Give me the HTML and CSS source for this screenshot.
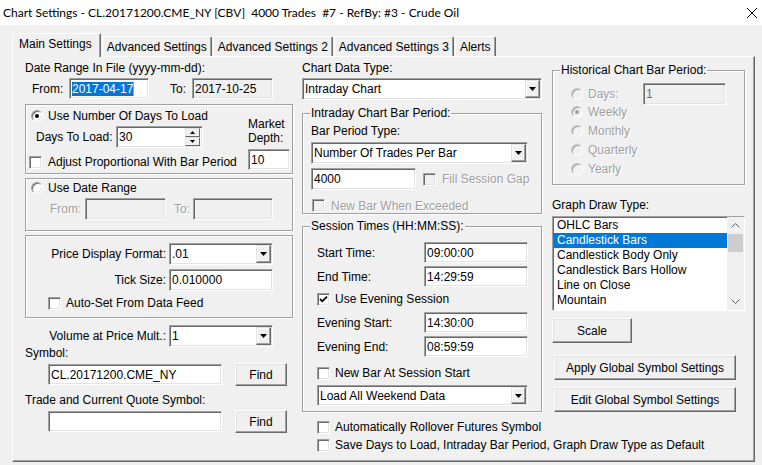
FILE: index.html
```html
<!DOCTYPE html>
<html>
<head>
<meta charset="utf-8">
<link rel="stylesheet" href="styles.css">
</head>
<body>
<div class="titlebar">
  <span class="title">Chart Settings - CL.20171200.CME_NY [CBV]  4000 Trades  #7 - RefBy: #3 - Crude Oil</span>
  <svg class="close" viewBox="0 0 10 10"><path d="M0 0L10 10M10 0L0 10"/></svg>
</div>
<div class="tabs">
  <div class="tab active">Main Settings</div>
  <div class="tab">Advanced Settings</div>
  <div class="tab">Advanced Settings 2</div>
  <div class="tab">Advanced Settings 3</div>
  <div class="tab">Alerts</div>
</div>
<div class="panel">
  <!-- LEFT COLUMN -->
  <div class="col col-left">
    <div class="lbl">Date Range In File (yyyy-mm-dd):</div>
    <div class="daterow">
      <span class="l-from">From:</span>
      <div class="edit w-from"><span class="sel">2017-04-17</span><span class="caret"></span></div>
      <span class="l-to">To:</span>
      <div class="edit dis ro w-to">2017-10-25</div>
    </div>
    <div class="grp g1">
      <div class="g1-main">
        <div class="opt r-days"><span class="rad on"></span><span>Use Number Of Days To Load</span></div>
        <div class="days">
          <span class="l-days">Days To Load:</span>
          <div class="edit w-days">
            <span class="val">30</span>
            <div class="spin">
              <div class="sbtn"><svg class="stri" viewBox="0 0 5 3"><path d="M2.5 0L5 3H0z"/></svg></div>
              <div class="sbtn"><svg class="stri" viewBox="0 0 5 3"><path d="M0 0H5L2.5 3z"/></svg></div>
            </div>
          </div>
        </div>
        <div class="opt c-adj"><span class="chk"></span><span>Adjust Proportional With Bar Period</span></div>
      </div>
      <div class="g1-md">
        <div class="md-lbl">Market<br>Depth:</div>
        <div class="edit w-md">10</div>
      </div>
    </div>
    <div class="grp g2">
      <div class="opt r-range"><span class="rad"></span><span>Use Date Range</span></div>
      <div class="rangerow">
        <span class="l-rfrom dtext">From:</span>
        <div class="edit dis w-rfrom"></div>
        <span class="l-rto dtext">To:</span>
        <div class="edit dis w-rto"></div>
      </div>
    </div>
    <div class="grp g3">
      <div class="frow">
        <span class="flbl">Price Display Format:</span>
        <div class="combo w-fmt"><span class="val">.01</span><span class="drop"><svg class="tri" viewBox="0 0 7 4"><path d="M0 0h7L3.5 4z"/></svg></span></div>
      </div>
      <div class="frow r-tick">
        <span class="flbl">Tick Size:</span>
        <div class="edit w-fmt">0.010000</div>
      </div>
      <div class="opt c-auto"><span class="chk"></span><span>Auto-Set From Data Feed</span></div>
    </div>
    <div class="frow r-vol">
      <span class="flbl vlbl">Volume at Price Mult.:</span>
      <div class="combo w-fmt"><span class="val">1</span><span class="drop"><svg class="tri" viewBox="0 0 7 4"><path d="M0 0h7L3.5 4z"/></svg></span></div>
    </div>
    <div class="lbl l-sym">Symbol:</div>
    <div class="symrow">
      <div class="edit w-sym">CL.20171200.CME_NY</div>
      <div class="btn w-find">Find</div>
    </div>
    <div class="lbl l-trade">Trade and Current Quote Symbol:</div>
    <div class="symrow r-trade">
      <div class="edit w-sym"></div>
      <div class="btn w-find">Find</div>
    </div>
  </div>

  <!-- MIDDLE COLUMN -->
  <div class="col col-mid">
    <div class="lbl">Chart Data Type:</div>
    <div class="combo w-cdt"><span class="val">Intraday Chart</span><span class="drop"><svg class="tri" viewBox="0 0 7 4"><path d="M0 0h7L3.5 4z"/></svg></span></div>
    <fieldset class="fs fs-bar">
      <legend>Intraday Chart Bar Period:</legend>
      <div class="lbl l-bpt">Bar Period Type:</div>
      <div class="combo w-bpt"><span class="val">Number Of Trades Per Bar</span><span class="drop"><svg class="tri" viewBox="0 0 7 4"><path d="M0 0h7L3.5 4z"/></svg></span></div>
      <div class="barrow">
        <div class="edit w-4000">4000</div>
        <span class="chk dis c-fill"></span><span class="dtext">Fill Session Gap</span>
      </div>
      <div class="opt c-exc"><span class="chk dis"></span><span class="dtext">New Bar When Exceeded</span></div>
    </fieldset>
    <fieldset class="fs fs-sess">
      <legend>Session Times (HH:MM:SS):</legend>
      <div class="trow r-start"><span class="tlbl">Start Time:</span><div class="edit w-time">09:00:00</div></div>
      <div class="trow r-end"><span class="tlbl">End Time:</span><div class="edit w-time">14:29:59</div></div>
      <div class="opt c-eve"><span class="chk"><svg class="tick" viewBox="0 0 11 11"><path d="M2 5L4.3 7.3L9 2.6"/></svg></span><span>Use Evening Session</span></div>
      <div class="trow r-estart"><span class="tlbl">Evening Start:</span><div class="edit w-time">14:30:00</div></div>
      <div class="trow r-eend"><span class="tlbl">Evening End:</span><div class="edit w-time">08:59:59</div></div>
      <div class="opt c-nbs"><span class="chk"></span><span>New Bar At Session Start</span></div>
      <div class="combo w-wknd"><span class="val">Load All Weekend Data</span><span class="drop"><svg class="tri" viewBox="0 0 7 4"><path d="M0 0h7L3.5 4z"/></svg></span></div>
    </fieldset>
    <div class="opt c-roll"><span class="chk"></span><span>Automatically Rollover Futures Symbol</span></div>
    <div class="opt c-save"><span class="chk"></span><span>Save Days to Load, Intraday Bar Period, Graph Draw Type as Default</span></div>
  </div>

  <!-- RIGHT COLUMN -->
  <div class="col col-right">
    <fieldset class="fs fs-hist">
      <legend>Historical Chart Bar Period:</legend>
      <div class="hrow r-hdays"><span class="rad dis"></span><span class="dtext hl-days">Days:</span><div class="edit dis w-hdays">1</div></div>
      <div class="hrow"><span class="rad dis on"></span><span class="dtext">Weekly</span></div>
      <div class="hrow r-hnext"><span class="rad dis"></span><span class="dtext">Monthly</span></div>
      <div class="hrow r-hnext"><span class="rad dis"></span><span class="dtext">Quarterly</span></div>
      <div class="hrow r-hnext"><span class="rad dis"></span><span class="dtext">Yearly</span></div>
    </fieldset>
    <div class="lbl l-gdt">Graph Draw Type:</div>
    <div class="list">
      <div class="items">
        <div class="item">OHLC Bars</div>
        <div class="item sel">Candlestick Bars</div>
        <div class="item">Candlestick Body Only</div>
        <div class="item">Candlestick Bars Hollow</div>
        <div class="item">Line on Close</div>
        <div class="item">Mountain</div>
      </div>
      <div class="sb">
        <div class="sb-arrow"><svg class="chev" viewBox="0 0 9 5"><path d="M0.5 4.5L4.5 0.5L8.5 4.5"/></svg></div>
        <div class="thumb"></div>
        <div class="sb-arrow sb-down"><svg class="chev" viewBox="0 0 9 5"><path d="M0.5 0.5L4.5 4.5L8.5 0.5"/></svg></div>
      </div>
    </div>
    <div class="btn w-scale">Scale</div>
    <div class="btn w-glob b-apply">Apply Global Symbol Settings</div>
    <div class="btn w-glob b-edit">Edit Global Symbol Settings</div>
  </div>
</div>
</body>
</html>
```
FILE: styles.css
```css
html, body {
  margin: 0;
  padding: 0;
}
body {
  width: 762px;
  height: 465px;
  overflow: hidden;
  background: #f0f0f0;
  font-family: "Liberation Sans", Arial, sans-serif;
  font-size: 12px;
  line-height: 14px;
  color: #000;
}

/* title bar */
.titlebar {
  height: 25px;
  background: #fff;
  display: flex;
  align-items: center;
  justify-content: space-between;
  padding: 0 5px 0 3px;
}
.title {
  font-family: Lato, "Liberation Sans", sans-serif;
  font-size: 12px;
  white-space: pre;
}
.close {
  width: 10px;
  height: 10px;
  stroke: #000;
  stroke-width: 1;
  fill: none;
}

/* tabs */
.tabs {
  display: flex;
  align-items: flex-end;
  height: 23px;
  margin: 8px 0 0 12px;
  position: relative;
  z-index: 1;
}
.tab {
  box-sizing: border-box;
  height: 20px;
  padding: 3px 4px 0 4px;
  border: 1px solid;
  border-bottom: none;
  border-color: #fff #696969 transparent #fff;
  box-shadow: inset -1px 0 0 #a0a0a0;
  border-radius: 2px 2px 0 0;
  white-space: nowrap;
  margin-left: 1px;
}
.tab.active {
  height: 24px;
  margin-bottom: -1px;
  margin-left: 0;
  padding: 3px 8px 0 6px;
  background: #f0f0f0;
}

/* panel */
.panel {
  box-sizing: border-box;
  width: 743px;
  height: 406px;
  margin-left: 12px;
  border: 1px solid;
  border-color: #fff #696969 #696969 #fff;
  box-shadow: inset -1px -1px 0 #a0a0a0;
  display: flex;
  padding: 4px 0 0 12px;
}
.col {
  display: flex;
  flex-direction: column;
  align-items: flex-start;
}
.col-left { width: 268px; }
.col-mid { width: 240px; margin-left: 9px; }
.col-right { width: 193px; margin-left: 10px; }

.lbl { white-space: nowrap; }
.dtext { color: #a0a0a0; text-shadow: 1px 1px 0 #fff; white-space: nowrap; }

/* generic controls */
.edit {
  box-sizing: border-box;
  height: 22px;
  border: 1px solid;
  border-color: #a0a0a0 #fff #fff #a0a0a0;
  box-shadow: inset 1px 1px 0 #696969, inset -1px -1px 0 #e3e3e3;
  background: #fff;
  padding: 0 2px;
  display: flex;
  align-items: center;
  white-space: nowrap;
  overflow: hidden;
}
.edit.dis { background: #f0f0f0; color: #6d6d6d; }
.edit.ro { color: #000; }
.sel { background: #0078d7; color: #fff; }
.caret { display: inline-block; width: 1px; height: 14px; background: #ff8a1e; }

.combo {
  box-sizing: border-box;
  height: 22px;
  border: 1px solid;
  border-color: #a0a0a0 #fff #fff #a0a0a0;
  box-shadow: inset 1px 1px 0 #696969, inset -1px -1px 0 #e3e3e3;
  background: #fff;
  display: flex;
  align-items: stretch;
  padding: 1px;
}
.combo .val {
  flex: 1;
  display: flex;
  align-items: center;
  padding-left: 1px;
  white-space: nowrap;
}
.drop {
  box-sizing: border-box;
  width: 15px;
  border: 1px solid;
  border-color: #e3e3e3 #696969 #696969 #e3e3e3;
  box-shadow: inset -1px -1px 0 #a0a0a0, inset 1px 1px 0 #fff;
  background: #f0f0f0;
  display: flex;
  align-items: center;
  justify-content: center;
}
.tri { width: 7px; height: 4px; fill: #000; }

.btn {
  box-sizing: border-box;
  display: flex;
  align-items: center;
  justify-content: center;
  border: 1px solid;
  border-color: #fff #696969 #696969 #fff;
  box-shadow: inset -1px -1px 0 #a0a0a0, inset 1px 1px 0 #e3e3e3;
  background: #f0f0f0;
  white-space: nowrap;
}

.chk {
  box-sizing: border-box;
  width: 13px;
  height: 13px;
  flex: none;
  border: 1px solid;
  border-color: #a0a0a0 #fff #fff #a0a0a0;
  box-shadow: inset 1px 1px 0 #696969, inset -1px -1px 0 #e3e3e3;
  background: #fff;
  display: flex;
}
.chk.dis { background: #f0f0f0; }
.tick { width: 11px; height: 11px; fill: none; stroke: #000; stroke-width: 1.8; }

.rad {
  box-sizing: border-box;
  width: 12px;
  height: 12px;
  flex: none;
  border-radius: 50%;
  border: 1px solid;
  border-color: #a0a0a0 #fff #fff #a0a0a0;
  box-shadow: inset 1px 1px 0 #696969, inset -1px -1px 0 #e3e3e3;
  background: #fff;
  display: flex;
  align-items: center;
  justify-content: center;
}
.rad.on::after {
  content: "";
  width: 4px;
  height: 4px;
  border-radius: 50%;
  background: #000;
}
.rad.dis { background: #f0f0f0; border-color: #c8c8c8 #fff #fff #c8c8c8; box-shadow: inset 1px 1px 0 #a0a0a0; }
.rad.dis.on::after { background: #a0a0a0; }

.opt {
  display: flex;
  align-items: center;
  height: 14px;
  white-space: nowrap;
}

/* group boxes */
.grp {
  box-sizing: border-box;
  width: 268px;
  border: 1px solid #a0a0a0;
  box-shadow: inset 1px 1px 0 #fff, 1px 1px 0 #fff;
}
.fs {
  box-sizing: border-box;
  margin: 0;
  padding: 0;
  min-width: 0;
  border: 1px solid #a0a0a0;
  box-shadow: inset 1px 1px 0 #fff, 1px 1px 0 #fff;
  display: flex;
  flex-direction: column;
  align-items: flex-start;
}
.fs legend {
  padding: 0 1px;
  line-height: 14px;
  background: #f0f0f0;
  white-space: nowrap;
}

/* left column */
.daterow {
  display: flex;
  align-items: center;
  margin-top: 3px;
  height: 21px;
}
.daterow .edit { height: 21px; }
.l-from { width: 37px; margin-left: 7px; }
.w-from { width: 80px; }
.l-to { width: 22px; margin-left: 21px; }
.w-to { width: 81px; }

.g1 {
  margin-top: 5px;
  height: 70px;
  display: flex;
}
.g1-main { flex: 1; padding-top: 4px; }
.r-days .rad { margin: 0 5px 0 5px; }
.days {
  display: flex;
  align-items: center;
  margin-top: 3px;
  height: 22px;
}
.l-days { width: 80px; margin-left: 10px; white-space: nowrap; }
.w-days { width: 87px; padding-right: 2px; }
.w-days .val { flex: 1; }
.spin {
  width: 15px;
  height: 18px;
  display: flex;
  flex-direction: column;
}
.sbtn {
  box-sizing: border-box;
  height: 9px;
  border: 1px solid;
  border-color: #e3e3e3 #696969 #696969 #e3e3e3;
  background: #f0f0f0;
  display: flex;
  align-items: center;
  justify-content: center;
}
.stri { width: 5px; height: 3px; fill: #000; }
.c-adj { margin-top: 7px; }
.c-adj .chk { margin: 0 6px 0 3px; }
.g1-md {
  width: 42px;
  margin-right: 2px;
  padding-top: 12px;
}
.md-lbl { white-space: nowrap; }
.w-md { width: 42px; height: 21px; margin-top: 4px; }

.g2 {
  margin-top: 4px;
  height: 53px;
  padding-top: 2px;
}
.r-range .rad { margin: 0 5px 0 5px; }
.rangerow {
  display: flex;
  align-items: center;
  margin-top: 3px;
}
.l-rfrom { width: 35px; margin-left: 24px; }
.w-rfrom { width: 81px; }
.l-rto { width: 19px; margin-left: 8px; }
.w-rto { width: 80px; }

.g3 {
  margin-top: 4px;
  height: 83px;
  padding-top: 7px;
}
.frow {
  display: flex;
  align-items: center;
}
.flbl {
  width: 140px;
  margin-right: 3px;
  text-align: right;
  white-space: nowrap;
}
.vlbl { width: 141px; }
.w-fmt { width: 104px; }
.r-tick { margin-top: 4px; }
.c-auto { margin-top: 5px; }
.c-auto .chk { margin: 0 5px 0 22px; }
.r-vol { margin-top: 7px; }
.l-sym { line-height: 13px; }
.symrow {
  display: flex;
  align-items: center;
  height: 23px;
  margin-top: 3px;
}
.w-sym { width: 174px; height: 21px; margin-left: 23px; }
.w-find { width: 52px; height: 23px; margin-left: 13px; }
.l-trade { margin-top: 7px; }

/* middle column */
.w-cdt { width: 240px; margin-top: 3px; }
.fs-bar {
  width: 240px;
  margin-top: 6px;
  padding: 0 0 1px 8px;
}
.fs-bar legend { margin-left: -1px; }
.l-bpt { margin-top: 4px; }
.w-bpt { width: 217px; margin-top: 4px; }
.barrow {
  display: flex;
  align-items: center;
  margin-top: 4px;
}
.w-4000 { width: 105px; }
.c-fill { margin: 0 6px 0 7px; }
.c-exc { margin-top: 9px; height: 13px; }
.c-exc .chk { margin: 0 6px 0 1px; }

.fs-sess {
  width: 240px;
  margin-top: 5px;
  padding: 0 0 5px 14px;
}
.fs-sess legend { margin-left: -7px; }
.trow {
  display: flex;
  align-items: center;
  margin-top: 3px;
}
.tlbl { width: 107px; white-space: nowrap; }
.w-time { width: 104px; height: 21px; }
.r-start { margin-top: 9px; }
.c-eve { margin-top: 5px; }
.c-eve .chk, .c-nbs .chk { margin-right: 5px; }
.r-estart { margin-top: 6px; }
.c-nbs { margin-top: 9px; }
.w-wknd { width: 211px; height: 21px; margin-top: 5px; }
.c-roll { margin-top: 8px; }
.c-save { margin-top: 4px; }
.c-roll .chk, .c-save .chk { margin: 0 5px 0 15px; }

/* right column */
.fs-hist {
  width: 193px;
  margin-top: 2px;
  padding: 0 0 8px 18px;
}
.fs-hist legend { margin-left: -11px; }
.hrow {
  display: flex;
  align-items: center;
  height: 14px;
}
.hrow .rad { margin-right: 5px; }
.r-hdays { height: 22px; margin-top: 6px; }
.hl-days { width: 55px; }
.w-hdays { width: 83px; }
.r-hnext { margin-top: 5px; }
.l-gdt { margin-top: 13px; }

.list {
  box-sizing: border-box;
  width: 193px;
  height: 95px;
  margin-top: 4px;
  border: 1px solid;
  border-color: #a0a0a0 #fff #fff #a0a0a0;
  box-shadow: inset 1px 1px 0 #696969;
  background: #fff;
  display: flex;
}
.items {
  flex: 1;
  padding-top: 1px;
  overflow: hidden;
}
.item {
  height: 15px;
  line-height: 15px;
  margin-left: 1px;
  padding-left: 3px;
  white-space: nowrap;
}
.item.sel { background: #0078d7; color: #fff; }
.sb {
  width: 17px;
  background: #f0f0f0;
  display: flex;
  flex-direction: column;
}
.sb-arrow {
  height: 17px;
  display: flex;
  align-items: center;
  justify-content: center;
}
.sb-down { margin-top: auto; }
.chev { width: 9px; height: 5px; fill: none; stroke: #606060; stroke-width: 1; }
.thumb { height: 18px; margin: 0 1px; background: #cdcdcd; }

.w-scale { width: 80px; height: 25px; margin-top: 7px; }
.w-glob { width: 182px; height: 25px; margin-left: 2px; }
.b-apply { margin-top: 12px; }
.b-edit { margin-top: 7px; }
```
